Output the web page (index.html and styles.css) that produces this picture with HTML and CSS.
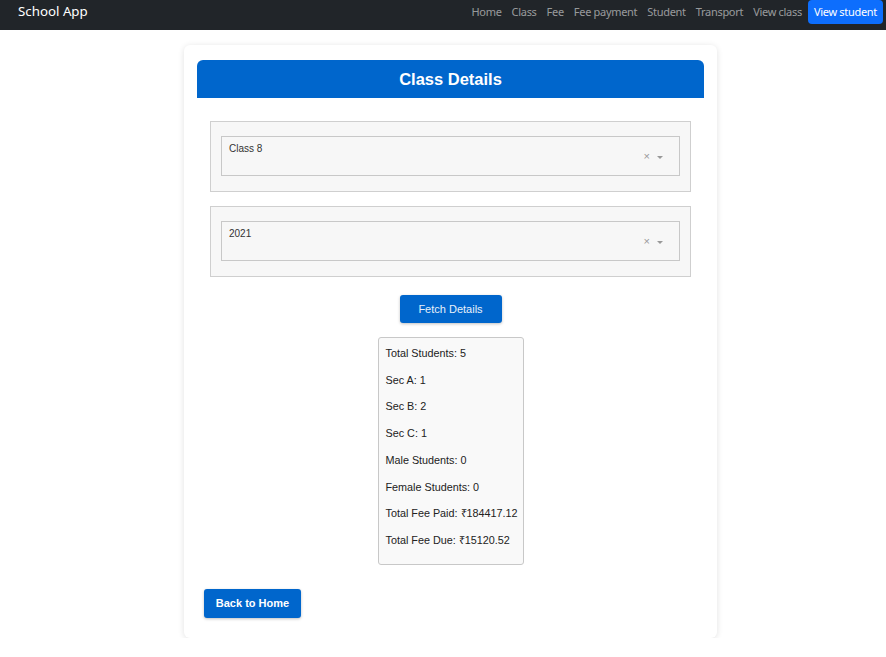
FILE: index.html
```html
<!DOCTYPE html>
<html>
<head>
<meta charset="utf-8">
<link rel="stylesheet" href="styles.css">
</head>
<body>
<nav class="navbar">
  <span class="brand">School App</span>
  <div class="links">
    <a class="link">Home</a>
    <a class="link">Class</a>
    <a class="link">Fee</a>
    <a class="link">Fee payment</a>
    <a class="link">Student</a>
    <a class="link">Transport</a>
    <a class="link">View class</a>
    <a class="link active">View student</a>
  </div>
</nav>
<main class="page">
  <section class="card">
    <h1 class="card-title">Class Details</h1>
    <div class="field">
      <div class="select">
        <span class="value">Class 8</span>
        <span class="icons"><span class="clear">×</span><span class="caret"></span></span>
      </div>
    </div>
    <div class="field">
      <div class="select">
        <span class="value">2021</span>
        <span class="icons"><span class="clear">×</span><span class="caret"></span></span>
      </div>
    </div>
    <div class="center">
      <button class="btn fetch">Fetch Details</button>
    </div>
    <div class="center">
      <div class="stats">
        <p>Total Students: 5</p>
        <p>Sec A: 1</p>
        <p>Sec B: 2</p>
        <p>Sec C: 1</p>
        <p>Male Students: 0</p>
        <p>Female Students: 0</p>
        <p>Total Fee Paid: ₹184417.12</p>
        <p>Total Fee Due: ₹15120.52</p>
      </div>
    </div>
    <button class="btn back">Back to Home</button>
  </section>
</main>
</body>
</html>
```
FILE: styles.css
```css
* { box-sizing: border-box; }
body {
  margin: 0;
  background: #fff;
  font-family: "Liberation Sans", Arial, sans-serif;
}
.navbar {
  height: 30px;
  background: #212529;
  display: flex;
  align-items: flex-start;
  justify-content: space-between;
  padding-left: 18px;
  padding-right: 3px;
  font-family: "Noto Sans", "DejaVu Sans", sans-serif;
}
.brand {
  color: #fff;
  font-size: 13.3px;
  line-height: 23px;
}
.links {
  display: flex;
  align-items: flex-start;
}
.link {
  color: rgba(255,255,255,0.55);
  font-size: 11px;
  line-height: 24px;
  padding: 0 5px;
  letter-spacing: -0.3px;
}
.link.active {
  color: #fff;
  background: #0d6efd;
  border-radius: 4px;
  padding: 0 6px;
  margin-left: 1px;
}
.page {
  display: flex;
  justify-content: center;
  padding-top: 15px;
  padding-left: 15px;
}
.card {
  width: 533px;
  background: #fff;
  border-radius: 6px;
  box-shadow: 0 1px 6px rgba(0,0,0,0.12);
  padding: 15px 13px 20px;
}
.card-title {
  margin: 0 0 23px;
  height: 38px;
  line-height: 39px;
  background: #0066cc;
  color: #fff;
  text-align: center;
  font-size: 16.5px;
  font-weight: bold;
  border-radius: 6px 6px 0 0;
}
.field {
  margin: 0 13px 14px;
  background: #f7f7f7;
  border: 1px solid #cfcfcf;
  padding: 14px 10px 15px;
}
.select {
  height: 40px;
  border: 1px solid #c8c8c8;
  background: #f7f7f7;
  display: flex;
  justify-content: space-between;
  padding: 6px 16px 0 7px;
}
.value {
  font-size: 10px;
  color: #333;
  line-height: 12px;
}
.icons {
  display: flex;
  align-items: center;
  gap: 7px;
  height: 26px;
}
.clear {
  color: #999;
  font-size: 11px;
  line-height: 11px;
}
.caret {
  width: 0;
  height: 0;
  border-left: 3px solid transparent;
  border-right: 3px solid transparent;
  border-top: 3px solid #999;
  margin-top: 2px;
}
.center {
  display: flex;
  justify-content: center;
}
.btn {
  border: none;
  background: #0066cc;
  color: #fff;
  font-family: "Liberation Sans", Arial, sans-serif;
  border-radius: 3px;
  box-shadow: 0 1px 3px rgba(0,0,0,0.25);
  padding: 0;
}
.fetch {
  margin-top: 4px;
  width: 102px;
  height: 28px;
  font-size: 11px;
  color: #e8f0fa;
}
.stats {
  margin-top: 14px;
  width: 146px;
  background: #f9f9f9;
  border: 1px solid #c8c8c8;
  border-radius: 3px;
  padding: 2px 7px 10px;
}
.stats p {
  margin: 0;
  font-size: 10.8px;
  line-height: 26.7px;
  color: #222;
  white-space: nowrap;
}
.back {
  margin: 24px 0 0 7px;
  width: 97px;
  height: 29px;
  font-size: 11px;
  font-weight: bold;
}
```
